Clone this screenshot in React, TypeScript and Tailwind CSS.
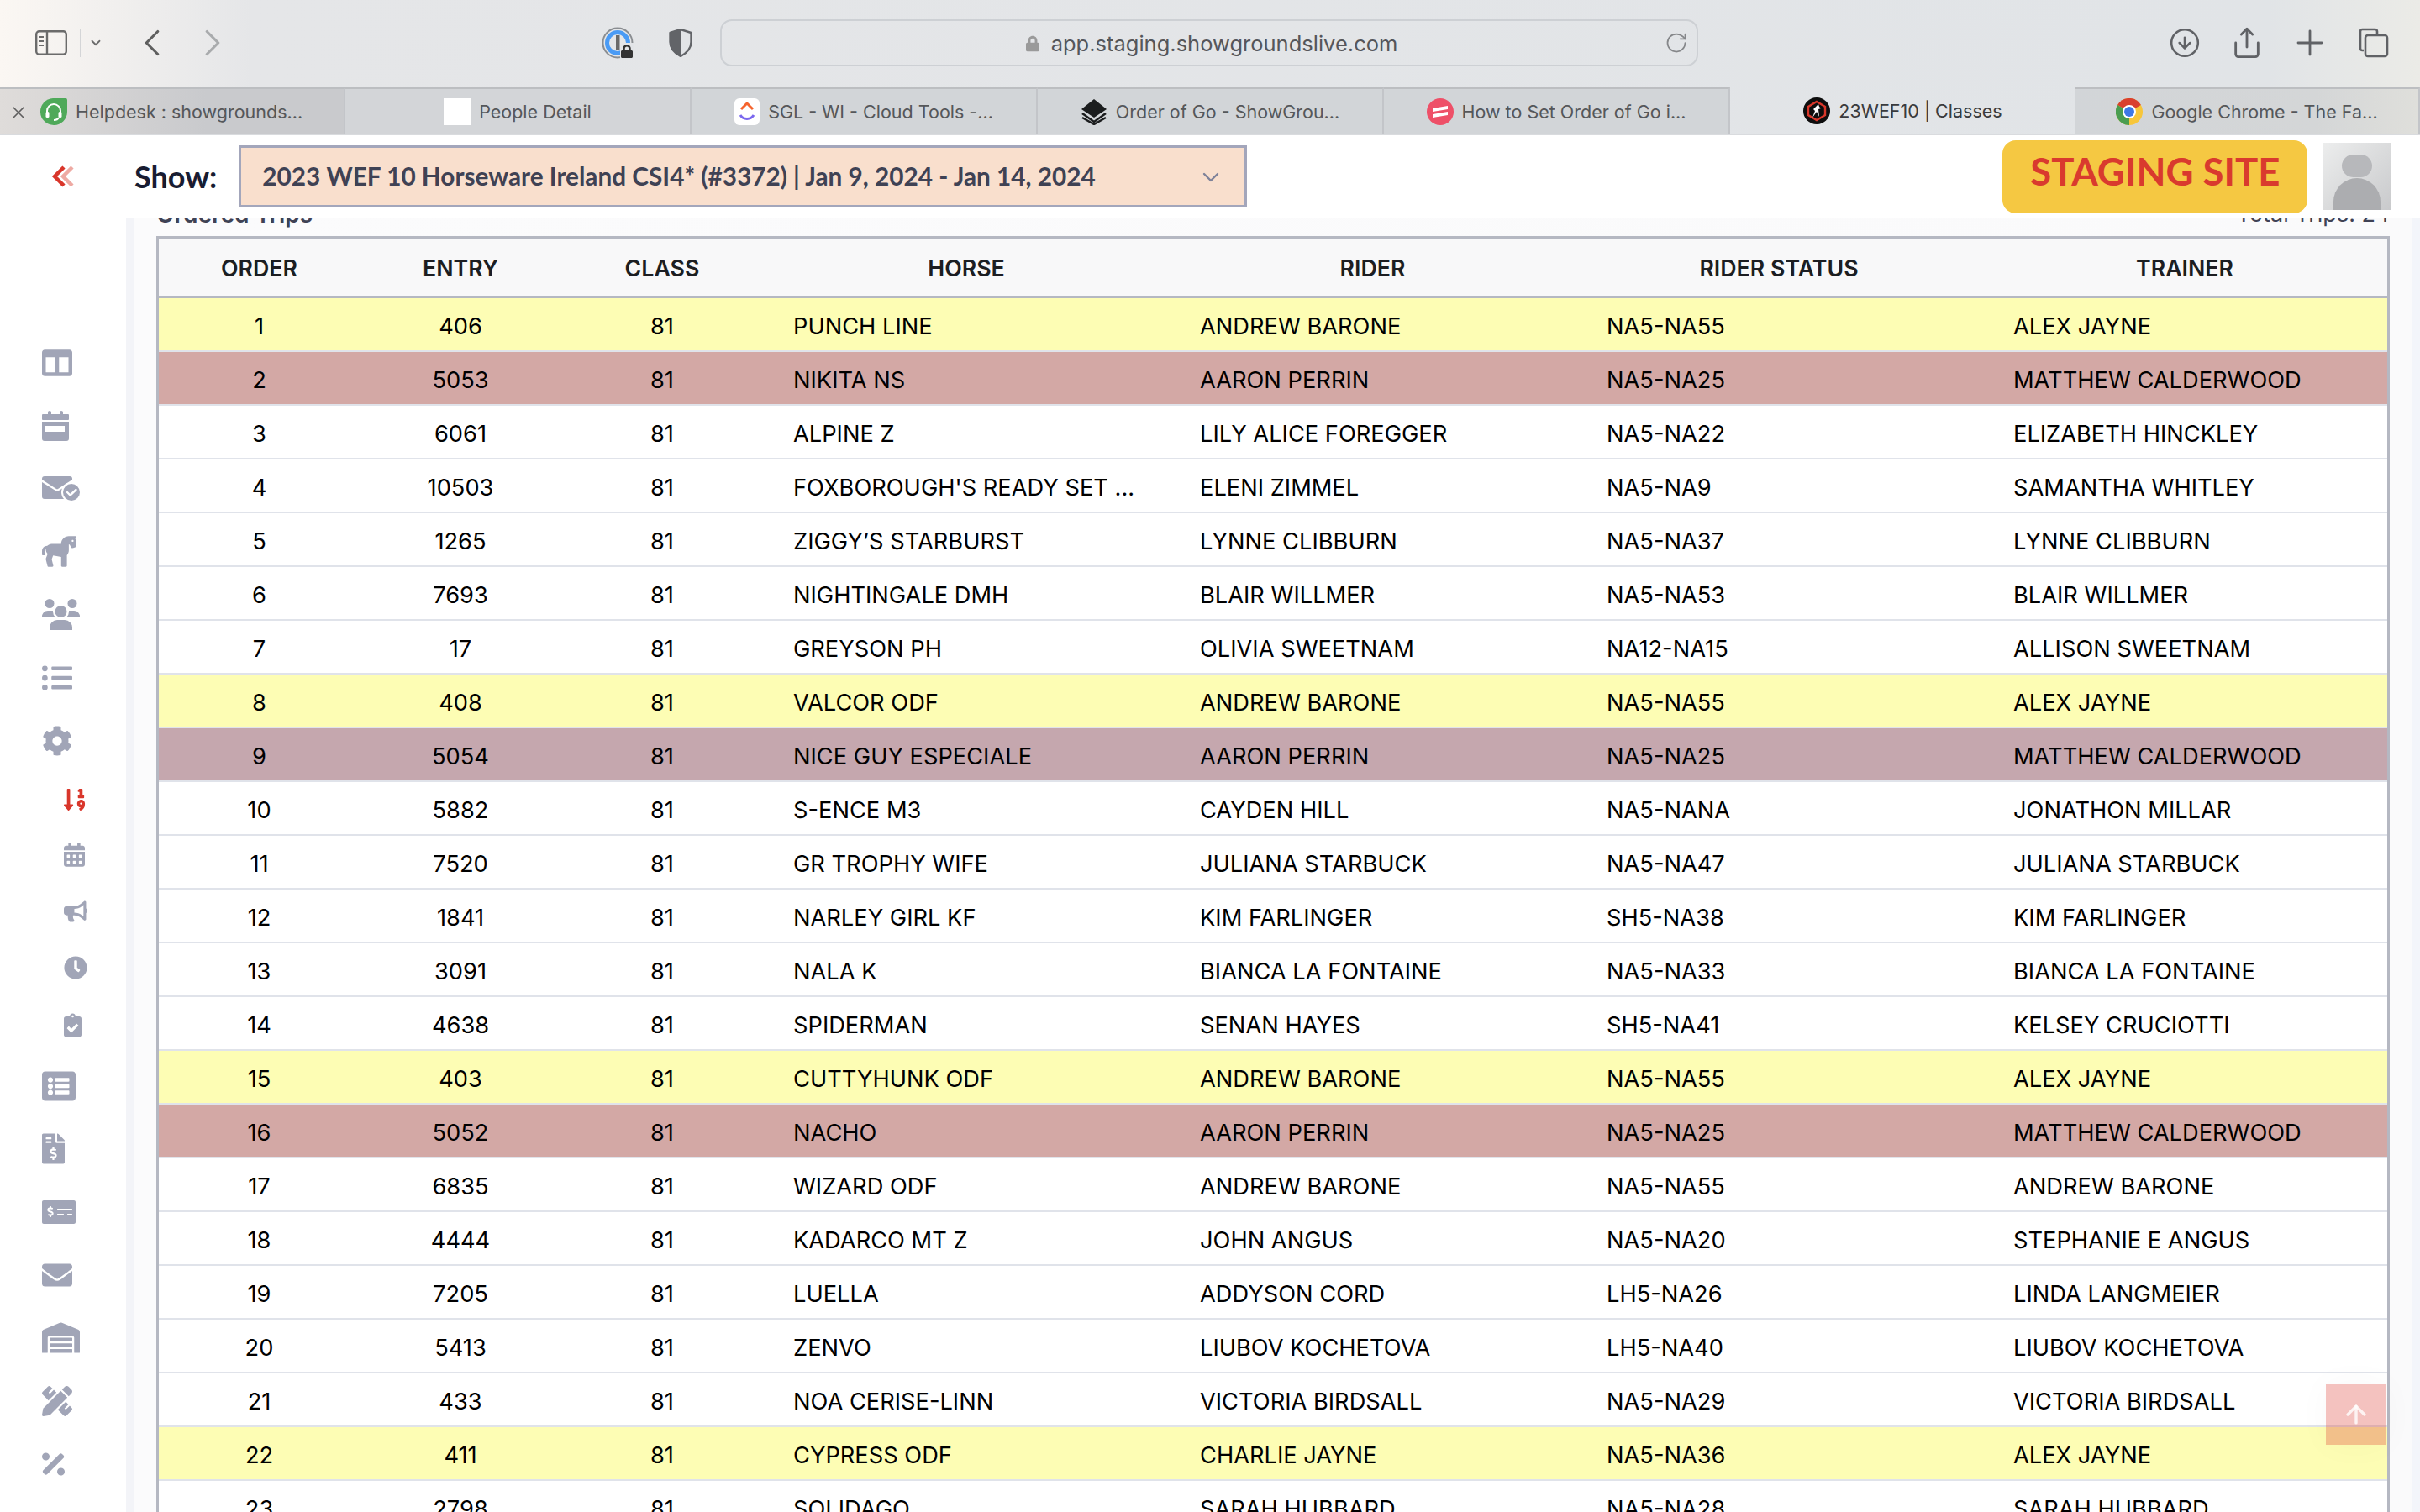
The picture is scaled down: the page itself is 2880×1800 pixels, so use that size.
import { ChevronDown, ChevronLeft, ChevronRight, CircleArrowDown, Plus, RotateCw, Share, X, ArrowUp } from 'lucide-react';
import {
    FaBullhorn,
    FaCalendarAlt,
    FaClipboardCheck,
    FaClock,
    FaCog,
    FaColumns,
    FaEnvelope,
    FaFileInvoiceDollar,
    FaHorse,
    FaListAlt,
    FaListUl,
    FaLock,
    FaMoneyCheckAlt,
    FaPencilRuler,
    FaPercentage,
    FaSortNumericDown,
    FaWarehouse,
} from 'react-icons/fa';
import type { ReactNode } from 'react';

type Tone = 'yellow' | 'rose' | 'mauve' | 'plain';
type Trip = [string, string, string, string, string, Tone?];

const trips: Trip[] = [
    ['406', 'PUNCH LINE', 'ANDREW BARONE', 'NA5-NA55', 'ALEX JAYNE', 'yellow'],
    ['5053', 'NIKITA NS', 'AARON PERRIN', 'NA5-NA25', 'MATTHEW CALDERWOOD', 'rose'],
    ['6061', 'ALPINE Z', 'LILY ALICE FOREGGER', 'NA5-NA22', 'ELIZABETH HINCKLEY'],
    ['10503', "FOXBOROUGH'S READY SET ...", 'ELENI ZIMMEL', 'NA5-NA9', 'SAMANTHA WHITLEY'],
    ['1265', 'ZIGGY’S STARBURST', 'LYNNE CLIBBURN', 'NA5-NA37', 'LYNNE CLIBBURN'],
    ['7693', 'NIGHTINGALE DMH', 'BLAIR WILLMER', 'NA5-NA53', 'BLAIR WILLMER'],
    ['17', 'GREYSON PH', 'OLIVIA SWEETNAM', 'NA12-NA15', 'ALLISON SWEETNAM'],
    ['408', 'VALCOR ODF', 'ANDREW BARONE', 'NA5-NA55', 'ALEX JAYNE', 'yellow'],
    ['5054', 'NICE GUY ESPECIALE', 'AARON PERRIN', 'NA5-NA25', 'MATTHEW CALDERWOOD', 'mauve'],
    ['5882', 'S-ENCE M3', 'CAYDEN HILL', 'NA5-NANA', 'JONATHON MILLAR'],
    ['7520', 'GR TROPHY WIFE', 'JULIANA STARBUCK', 'NA5-NA47', 'JULIANA STARBUCK'],
    ['1841', 'NARLEY GIRL KF', 'KIM FARLINGER', 'SH5-NA38', 'KIM FARLINGER'],
    ['3091', 'NALA K', 'BIANCA LA FONTAINE', 'NA5-NA33', 'BIANCA LA FONTAINE'],
    ['4638', 'SPIDERMAN', 'SENAN HAYES', 'SH5-NA41', 'KELSEY CRUCIOTTI'],
    ['403', 'CUTTYHUNK ODF', 'ANDREW BARONE', 'NA5-NA55', 'ALEX JAYNE', 'yellow'],
    ['5052', 'NACHO', 'AARON PERRIN', 'NA5-NA25', 'MATTHEW CALDERWOOD', 'rose'],
    ['6835', 'WIZARD ODF', 'ANDREW BARONE', 'NA5-NA55', 'ANDREW BARONE'],
    ['4444', 'KADARCO MT Z', 'JOHN ANGUS', 'NA5-NA20', 'STEPHANIE E ANGUS'],
    ['7205', 'LUELLA', 'ADDYSON CORD', 'LH5-NA26', 'LINDA LANGMEIER'],
    ['5413', 'ZENVO', 'LIUBOV KOCHETOVA', 'LH5-NA40', 'LIUBOV KOCHETOVA'],
    ['433', 'NOA CERISE-LINN', 'VICTORIA BIRDSALL', 'NA5-NA29', 'VICTORIA BIRDSALL'],
    ['411', 'CYPRESS ODF', 'CHARLIE JAYNE', 'NA5-NA36', 'ALEX JAYNE', 'yellow'],
    ['2798', 'SOLIDAGO', 'SARAH HUBBARD', 'NA5-NA28', 'SARAH HUBBARD'],
];

const toneClass: Record<Tone, string> = {
    yellow: 'bg-[#fdfdb4]',
    rose: 'bg-[#d3a8a5]',
    mauve: 'bg-[#c5a7ae]',
    plain: 'bg-white',
};

const gridCols = 'grid grid-cols-[239px_240px_240px_484px_483px_484px_482px]';

function EnvelopeCheckIcon() {
    return (
        <svg viewBox="0 0 45 30" className="w-[45px] h-[30px] fill-[#a1a5b7]">
            <path d="M3 0h30a3 3 0 0 1 3 3v1L19 15a2 2 0 0 1-2 0L0 4V3a3 3 0 0 1 3-3z" />
            <path d="M0 7l16 10a4 4 0 0 0 4 0L36 7v20H3a3 3 0 0 1-3-3z" />
            <circle cx="35" cy="19" r="12" fill="#fff" />
            <circle cx="35" cy="19" r="10" />
            <path d="M30 19l3.500 3.500L40.500 16" fill="none" stroke="#fff" strokeWidth="2.400" strokeLinecap="round" strokeLinejoin="round" />
        </svg>
    );
}

function CalendarBarIcon() {
    return (
        <svg viewBox="0 0 32 36" className="w-[32px] h-[36px] fill-[#a1a5b7]">
            <rect x="7" y="0" width="4" height="6" rx="2" />
            <rect x="21" y="0" width="4" height="6" rx="2" />
            <rect x="0" y="4" width="32" height="7" rx="1" />
            <path fillRule="evenodd" d="M0 13h32v20a3 3 0 0 1-3 3H3a3 3 0 0 1-3-3zM4 18v7h23v-7z" />
        </svg>
    );
}

function PeopleIcon() {
    return (
        <svg viewBox="0 0 45 37" className="w-[45px] h-[37px] fill-[#a1a5b7]">
            <circle cx="9" cy="5.500" r="5.500" />
            <circle cx="36" cy="5.500" r="5.500" />
            <circle cx="22.500" cy="15" r="7" />
            <path d="M0 22a7 7 0 0 1 7-8h6a10 10 0 0 0 3 8z" />
            <path d="M45 22a7 7 0 0 0-7-8h-6a10 10 0 0 1-3 8z" />
            <path d="M9 37v-3a9 9 0 0 1 9-9h9a9 9 0 0 1 9 9v3z" />
        </svg>
    );
}

function PanelIcon() {
    return (
        <svg viewBox="0 0 38 30" className="w-[38px] h-[30px] shrink-0 fill-none stroke-[#6b6b6b]" strokeWidth="2.400">
            <rect x="1.200" y="1.200" width="35.600" height="27.600" rx="3.500" />
            <path d="M14 1v28" />
            <path d="M5 8h5M5 13h5M5 18h5" strokeWidth="2" />
        </svg>
    );
}

function OnePasswordIcon() {
    return (
        <div className="relative w-[38px] h-[38px]">
            <svg viewBox="0 0 38 38" className="w-[38px] h-[38px] fill-none">
                <circle cx="19" cy="19" r="17.500" stroke="#8a8d91" strokeWidth="2" />
                <circle cx="19" cy="19" r="12.500" stroke="#4a9bf5" strokeWidth="5" />
                <rect x="17" y="10" width="4.500" height="17" fill="#6a6a6a" />
            </svg>
            <div className="absolute right-0 bottom-0 w-[16px] h-[19px] bg-[#e2e4e7] rounded-tl-[6px]">
                <FaLock className="w-[14px] h-[16px] text-[#333] ml-[1px] mt-[2px]" />
            </div>
        </div>
    );
}

function ShieldIcon() {
    return (
        <svg viewBox="0 0 28 34" className="w-[28px] h-[34px]">
            <path d="M14 1l12.500 4v11c0 8-5 13-12.500 17C6.500 29 1.500 24 1.500 16V5z" fill="#e2e4e7" stroke="#626468" strokeWidth="2.400" strokeLinejoin="round" />
            <path d="M14 1L1.500 5v11c0 8 5 13 12.500 17z" fill="#626468" />
        </svg>
    );
}

function TabsIcon() {
    return (
        <svg viewBox="0 0 36 36" className="w-[36px] h-[36px] fill-none stroke-[#606266]" strokeWidth="2.600">
            <path d="M6 27H4.500A2.500 2.500 0 0 1 2 24.500V4.500A2.500 2.500 0 0 1 4.500 2h15A2.500 2.500 0 0 1 22 4.500V8" />
            <rect x="8" y="9" width="26" height="25" rx="3" />
        </svg>
    );
}

function HelpdeskFavicon() {
    return (
        <svg viewBox="0 0 32 32" className="w-[32px] h-[32px]">
            <path d="M15 0h15a2 2 0 0 1 2 2v14a16 16 0 1 1-17-16z" fill="#4fa95a" />
            <path d="M8 19v-4a8 8 0 0 1 16 0v4M22 23c-1 2-3 3-6 3" fill="none" stroke="#fff" strokeWidth="2" />
            <rect x="6.500" y="16" width="4" height="7" rx="1.500" fill="#fff" />
            <rect x="21.500" y="16" width="4" height="7" rx="1.500" fill="#fff" />
        </svg>
    );
}

function ClickUpFavicon() {
    return (
        <svg viewBox="0 0 30 32" className="w-[30px] h-[32px]">
            <rect width="30" height="32" rx="6" fill="#fff" />
            <path d="M8 13l7-7 7 7" fill="none" stroke="#f5642e" strokeWidth="3" />
            <path d="M7 20c4 6 12 6 16 0" fill="none" stroke="#7b68ee" strokeWidth="3" />
        </svg>
    );
}

function LayersFavicon() {
    return (
        <svg viewBox="0 0 32 32" className="w-[32px] h-[32px]">
            <path d="M16 1l15 12-15 10L1 13z" fill="#1b1d1e" />
            <path d="M2 18l14 10 14-10M2 23l14 8 14-8" fill="none" stroke="#1b1d1e" strokeWidth="2.500" />
        </svg>
    );
}

function ArticleFavicon() {
    return (
        <svg viewBox="0 0 32 32" className="w-[32px] h-[32px]">
            <circle cx="16" cy="16" r="16" fill="#ee5068" />
            <path d="M7 12l18-3v4L7 16zM7 19l18-3v4L7 23z" fill="#fff" />
        </svg>
    );
}

function ShowFavicon() {
    return (
        <svg viewBox="0 0 32 32" className="w-[32px] h-[32px]">
            <circle cx="16" cy="16" r="16" fill="#0d0d0d" />
            <path d="M16 5l10 6v10l-10 6-10-6V11z" fill="none" stroke="#d8372a" strokeWidth="2.400" />
            <path d="M11 24l3-8-2-2 6-6 1 3 2 2-3 1 1 9-3-6z" fill="#fff" />
        </svg>
    );
}

function ChromeFavicon() {
    return (
        <svg viewBox="0 0 32 32" className="w-[32px] h-[32px]">
            <circle cx="16" cy="16" r="16" fill="#f7c63a" />
            <path d="M16 16L2.100 8A16 16 0 0 1 29.900 8z" fill="#d9402f" />
            <path d="M16 16L2.100 8A16 16 0 0 0 16 32z" fill="#4a9d50" />
            <circle cx="16" cy="16" r="8" fill="#fff" />
            <circle cx="16" cy="16" r="6" fill="#3d78e6" />
        </svg>
    );
}

const tabItems: { title: string; icon: ReactNode; width: string; bg: string; color: string }[] = [
    { title: 'Helpdesk : showgrounds...', icon: <HelpdeskFavicon />, width: 'w-[411px]', bg: 'bg-[linear-gradient(90deg,#dfdcda,#c9cacd_60%)]', color: 'text-[#55575a]' },
    { title: 'People Detail', icon: <div className="w-[32px] h-[32px] bg-white" />, width: 'w-[412px]', bg: 'bg-[#d3d5d8]', color: 'text-[#55575a]' },
    { title: 'SGL - WI - Cloud Tools -...', icon: <ClickUpFavicon />, width: 'w-[412px]', bg: 'bg-[#d2d5d8]', color: 'text-[#55575a]' },
    { title: 'Order of Go - ShowGrou...', icon: <LayersFavicon />, width: 'w-[412px]', bg: 'bg-[#d2d5d8]', color: 'text-[#55575a]' },
    { title: 'How to Set Order of Go i...', icon: <ArticleFavicon />, width: 'w-[412px]', bg: 'bg-[#d2d5d8]', color: 'text-[#55575a]' },
    { title: '23WEF10 | Classes', icon: <ShowFavicon />, width: 'w-[411px]', bg: 'bg-transparent', color: 'text-[#3a3b3d]' },
    { title: 'Google Chrome - The Fa...', icon: <ChromeFavicon />, width: 'w-[410px]', bg: 'bg-[linear-gradient(90deg,#d2d5d8,#d4d6d7_70%,#dfdfdb)]', color: 'text-[#55575a]' },
];

function BrowserChrome() {
    return (
        <div className="h-[161px] shrink-0 flex flex-col bg-[linear-gradient(90deg,#fbf7f3_0,#e5e6e8_300px,#e1e4e7_2700px,#ebebe7_2880px)] font-['Inter',sans-serif]">
            <div className="h-[104px] flex items-center pl-[42px] pb-[2px]">
                <PanelIcon />
                <div className="w-px h-[34px] shrink-0 bg-[#d4d5d7] ml-[15px]" />
                <ChevronDown className="w-[18px] h-[18px] shrink-0 ml-[9px] text-[#6b6b6b]" strokeWidth={2.4} />
                <ChevronLeft className="w-[54px] h-[54px] shrink-0 ml-[31px] text-[#5f5f5f]" strokeWidth={1.4} />
                <ChevronRight className="w-[54px] h-[54px] shrink-0 ml-[18px] text-[#a9abad]" strokeWidth={1.4} />
                <div className="ml-[436px] shrink-0"><OnePasswordIcon /></div>
                <div className="ml-[42px] shrink-0"><ShieldIcon /></div>
                <div className="ml-[33px] w-[1164px] shrink-0 h-[56px] rounded-[14px] border-2 border-[#cdd0d4] flex items-center justify-center relative pl-[6px] pt-[2px]">
                    <FaLock className="w-[16px] h-[22px] text-[#9a9a9a] mr-[14px]" />
                    <span className="text-[25.5px] text-[#55565a]">app.staging.showgroundslive.com</span>
                    <RotateCw className="absolute right-[10px] top-[12px] w-[28px] h-[28px] text-[#85878a]" strokeWidth={1.5} />
                </div>
                <CircleArrowDown className="w-[38px] h-[38px] shrink-0 ml-[560px] text-[#606266]" strokeWidth={1.6} />
                <Share className="w-[40px] h-[42px] shrink-0 ml-[35px] text-[#606266]" strokeWidth={1.7} />
                <Plus className="w-[48px] h-[48px] shrink-0 ml-[31px] text-[#606266]" strokeWidth={1.4} />
                <div className="ml-[34px] shrink-0"><TabsIcon /></div>
            </div>
            <div className="h-[56px] flex">
                {tabItems.map((tab, i) => (
                    <div
                        key={tab.title}
                        className={`${tab.width} ${tab.bg} relative h-full flex items-center ${i === 0 ? 'pl-[48px]' : 'justify-center'} gap-[10px] ${i === 5 ? 'border-t-0' : 'border-t-2 border-[#bcbec1] border-r-2 border-r-[#c3c5c9]'}`}
                    >
                        {i === 0 && <X className="absolute left-[10px] top-[16px] w-[24px] h-[24px] text-[#5e5e5e]" strokeWidth={1.6} />}
                        {tab.icon}
                        <span className={`text-[21.5px] ${tab.color}`}>{tab.title}</span>
                    </div>
                ))}
            </div>
            <div className="h-px bg-[#d9dbde]" />
        </div>
    );
}

function AppHeader() {
    return (
        <div className="h-[99px] bg-white flex items-center font-['Lato',sans-serif] shrink-0 pb-[2px]">
            <svg viewBox="0 0 28 26" className="w-[28px] h-[26px] ml-[60px] fill-none" strokeWidth="4.500">
                <path d="M16 2L5 13l11 11" stroke="#d9362b" />
                <path d="M26 2L15 13l11 11" stroke="#eeaaa3" />
            </svg>
            <span className="ml-[72px] text-[36px] font-bold text-[#181c32] leading-none">Show:</span>
            <div className="ml-[26px] w-[1200px] h-[74px] border-[3px] border-[#a3a6bb] bg-[#f9dfcd] flex items-center justify-between pl-[25px] pr-[24px] pt-[2px]">
                <span className="text-[29.75px] font-bold text-[#3f4254]">2023 WEF 10 Horseware Ireland CSI4* (#3372) | Jan 9, 2024 - Jan 14, 2024</span>
                <ChevronDown className="w-[32px] h-[32px] text-[#7e8299]" strokeWidth={1.8} />
            </div>
            <div className="ml-[899px] mt-[2px] w-[363px] h-[87px] rounded-[16px] bg-[#f5c842] flex justify-center pt-[7px]">
                <span className="text-[45.5px] font-bold text-[#d93a2e] leading-[60px]">STAGING SITE</span>
            </div>
            <div className="ml-[19px] w-[80px] h-[80px] bg-[linear-gradient(135deg,#eceded,#c9cacc)] overflow-hidden flex flex-col items-center">
                <div className="w-[36px] h-[44px] rounded-full bg-[#b7b8bb] mt-[14px]" />
                <div className="w-[56px] h-[60px] rounded-t-[28px] bg-[#acadb0] mt-[1px]" />
            </div>
        </div>
    );
}

const topIcon = 'text-[#a1a5b7]';

function Sidebar() {
    return (
        <div className="w-[150px] shrink-0 bg-white pt-[134px]">
            <div className="h-[75px] flex items-center pl-[50px]"><FaColumns className={`w-[36px] h-[36px] ${topIcon}`} /></div>
            <div className="h-[75px] flex items-center pl-[50px]"><CalendarBarIcon /></div>
            <div className="h-[75px] flex items-center pl-[50px]"><EnvelopeCheckIcon /></div>
            <div className="h-[75px] flex items-center pl-[50px]"><FaHorse className={`w-[41px] h-[41px] ${topIcon}`} /></div>
            <div className="h-[75px] flex items-center pl-[50px]"><PeopleIcon /></div>
            <div className="h-[75px] flex items-center pl-[50px]"><FaListUl className={`w-[36px] h-[36px] ${topIcon}`} /></div>
            <div className="h-[75px] flex items-center pl-[50px]"><FaCog className={`w-[36px] h-[36px] ${topIcon}`} /></div>
            <div className="h-[65px] flex items-center pl-[76px]"><FaSortNumericDown className="w-[26px] h-[30px] text-[#d9362b]" /></div>
            <div className="h-[67px] flex items-center pl-[76px]"><FaCalendarAlt className={`w-[25px] h-[29px] ${topIcon}`} /></div>
            <div className="h-[67px] flex items-center pl-[76px]"><FaBullhorn className={`w-[28px] h-[28px] ${topIcon}`} /></div>
            <div className="h-[67px] flex items-center pl-[76px]"><FaClock className={`w-[28px] h-[28px] ${topIcon}`} /></div>
            <div className="h-[70px] flex items-center pl-[76px]"><FaClipboardCheck className={`w-[21px] h-[29px] ${topIcon}`} /></div>
            <div className="h-[75px] flex items-center pl-[50px]"><FaListAlt className={`w-[40px] h-[40px] ${topIcon}`} /></div>
            <div className="h-[75px] flex items-center pl-[50px]"><FaFileInvoiceDollar className={`w-[27px] h-[37px] ${topIcon}`} /></div>
            <div className="h-[75px] flex items-center pl-[50px]"><FaMoneyCheckAlt className={`w-[40px] h-[40px] ${topIcon}`} /></div>
            <div className="h-[75px] flex items-center pl-[50px]"><FaEnvelope className={`w-[36px] h-[36px] ${topIcon}`} /></div>
            <div className="h-[75px] flex items-center pl-[50px]"><FaWarehouse className={`w-[45px] h-[45px] ${topIcon}`} /></div>
            <div className="h-[75px] flex items-center pl-[50px]"><FaPencilRuler className={`w-[36px] h-[36px] ${topIcon}`} /></div>
            <div className="h-[75px] flex items-center pl-[50px]"><FaPercentage className={`w-[27px] h-[36px] ${topIcon}`} /></div>
        </div>
    );
}

function TripsTable() {
    return (
        <div className="w-[2658px] border-x-[3px] border-t-[3px] border-[#b5b8c2] font-['Inter',sans-serif]">
            <div className={`${gridCols} h-[71px] pt-[3px] items-center bg-[#f8f8f9] border-b-[3px] border-[#b5b8c2] text-center text-[26.75px] font-semibold text-[#1c1e22]`}>
                <div>ORDER</div>
                <div>ENTRY</div>
                <div>CLASS</div>
                <div>HORSE</div>
                <div>RIDER</div>
                <div>RIDER STATUS</div>
                <div>TRAINER</div>
            </div>
            {trips.map((trip, i) => (
                <div
                    key={trip[0]}
                    className={`${gridCols} h-[64px] pt-[6px] items-center border-b-2 border-[#e0e3ea] text-[27.25px] text-black ${toneClass[trip[5] ?? 'plain']}`}
                >
                    <div className="text-center">{i + 1}</div>
                    <div className="text-center">{trip[0]}</div>
                    <div className="text-center">81</div>
                    <div className="pl-[36px] truncate">{trip[1]}</div>
                    <div className="pl-[36px] truncate">{trip[2]}</div>
                    <div className="pl-[37px] truncate">{trip[3]}</div>
                    <div className="pl-[37px] truncate">{trip[4]}</div>
                </div>
            ))}
        </div>
    );
}

export default function App() {
    return (
        <div className="relative w-[2880px] h-[1800px] overflow-hidden flex flex-col bg-white">
            <BrowserChrome />
            <AppHeader />
            <div className="flex-1 min-h-0 flex">
                <Sidebar />
                <div className="w-[10px] shrink-0 bg-[#f3f4f8]" />
                <main className="flex-1 min-w-0 overflow-hidden bg-[linear-gradient(90deg,#fbfbfc,#fafafb_2700px)] pl-[26px]">
                    <div className="w-[2658px] h-[12px] mb-[9px] flex items-end justify-between text-[28px] font-['Inter',sans-serif] text-[#3f4254] leading-[34px]">
                        <span className="font-semibold">Ordered Trips</span>
                        <span className="text-[27px]">Total Trips: 24</span>
                    </div>
                    <TripsTable />
                </main>
                <div className="w-[10px] shrink-0 bg-[#f3f5fa]" />
            </div>
            <button className="absolute left-[2768px] top-[1648px] w-[72px] h-[72px] bg-[#d9362b]/30 shadow-[0_0_40px_rgba(0,0,0,0.03)] flex items-center justify-center">
                <ArrowUp className="w-[34px] h-[34px] text-white/80" strokeWidth={2.4} />
            </button>
        </div>
    );
}
